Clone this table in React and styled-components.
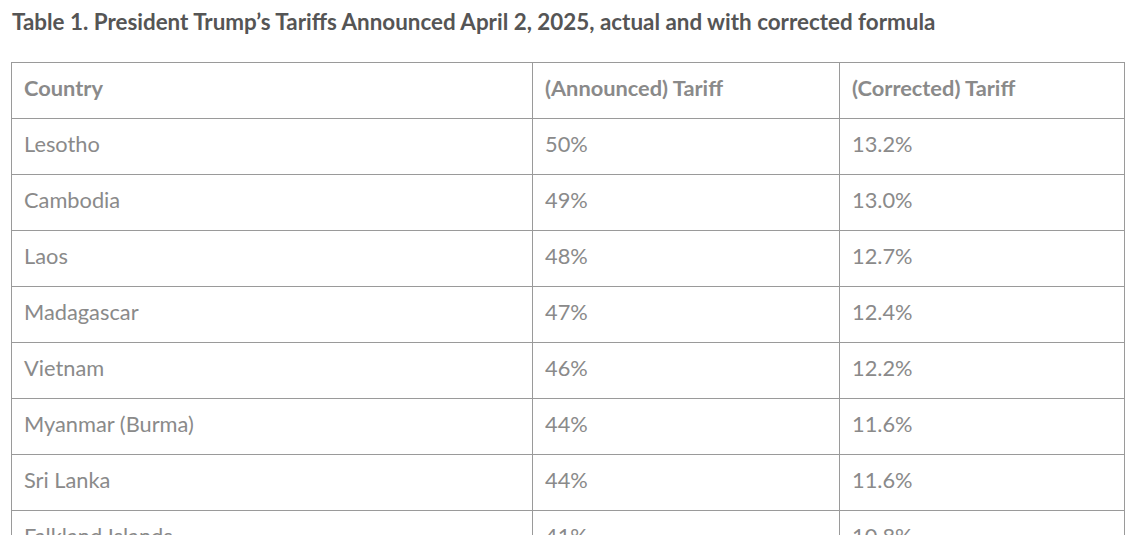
import React from 'react';
import styled, { createGlobalStyle } from 'styled-components';

const GlobalStyle = createGlobalStyle`
  body {
    margin: 0;
    background: #ffffff;
    font-family: Lato, "Liberation Sans", sans-serif;
  }
`;

const Page = styled.div`
  padding: 8px 18px 0 11px;
`;

const Title = styled.h3`
  margin: 0 0 26px 1px;
  font-size: 22.4px;
  line-height: 28px;
  font-weight: 700;
  color: #555555;
`;

const Table = styled.table`
  width: 1113px;
  border-collapse: collapse;
  table-layout: fixed;
`;

const Cell = styled.td`
  height: 49px;
  padding: 0 12px 6px;
  border: 1px solid #9a9a9a;
  font-size: 21.8px;
  line-height: 26px;
  font-weight: ${(p) => (p.head ? 700 : 400)};
  color: #8a8a8a;
  vertical-align: middle;
  text-align: left;
`;

const rows = [
  ['Lesotho', '50%', '13.2%'],
  ['Cambodia', '49%', '13.0%'],
  ['Laos', '48%', '12.7%'],
  ['Madagascar', '47%', '12.4%'],
  ['Vietnam', '46%', '12.2%'],
  ['Myanmar (Burma)', '44%', '11.6%'],
  ['Sri Lanka', '44%', '11.6%'],
  ['Falkland Islands', '41%', '10.8%'],
];

export default function App() {
  return (
    <Page>
      <GlobalStyle />
      <Title>Table 1. President Trump’s Tariffs Announced April 2, 2025, actual and with corrected formula</Title>
      <Table>
        <colgroup>
          <col style={{ width: 521 }} />
          <col style={{ width: 307 }} />
          <col style={{ width: 285 }} />
        </colgroup>
        <thead>
          <tr>
            <Cell as="th" head>Country</Cell>
            <Cell as="th" head>(Announced) Tariff</Cell>
            <Cell as="th" head>(Corrected) Tariff</Cell>
          </tr>
        </thead>
        <tbody>
          {rows.map((r) => (
            <tr key={r[0]}>
              {r.map((c, i) => (
                <Cell key={i}>{c}</Cell>
              ))}
            </tr>
          ))}
        </tbody>
      </Table>
    </Page>
  );
}
